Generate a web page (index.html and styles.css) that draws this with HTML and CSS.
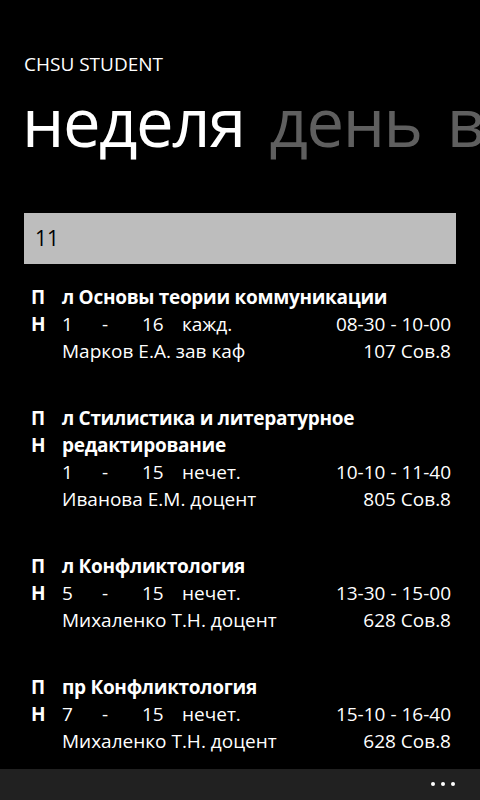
FILE: index.html
```html
<!DOCTYPE html>
<html lang="ru">
<head>
<meta charset="utf-8">
<title>CHSU STUDENT</title>
<link rel="stylesheet" href="styles.css">
</head>
<body>
<div class="screen">
  <div class="app-title">CHSU STUDENT</div>
  <div class="pivot">
    <span class="pivot-item active">неделя</span>
    <span class="pivot-item">день</span>
    <span class="pivot-item">в</span>
  </div>
  <div class="week-bar">11</div>
  <div class="list">
    <div class="lesson">
      <div class="day"><span>П</span><span>Н</span></div>
      <div class="info">
        <div class="name">л Основы теории коммуникации</div>
        <div class="row">
          <span class="c">1</span><span class="c">-</span><span class="c">16</span><span class="type">кажд.</span><span class="time">08-30 - 10-00</span>
        </div>
        <div class="row">
          <span class="teacher">Марков Е.А. зав каф</span><span class="room">107 Сов.8</span>
        </div>
      </div>
    </div>
    <div class="lesson">
      <div class="day"><span>П</span><span>Н</span></div>
      <div class="info">
        <div class="name">л Стилистика и литературное редактирование</div>
        <div class="row">
          <span class="c">1</span><span class="c">-</span><span class="c">15</span><span class="type">нечет.</span><span class="time">10-10 - 11-40</span>
        </div>
        <div class="row">
          <span class="teacher">Иванова Е.М. доцент</span><span class="room">805 Сов.8</span>
        </div>
      </div>
    </div>
    <div class="lesson">
      <div class="day"><span>П</span><span>Н</span></div>
      <div class="info">
        <div class="name">л Конфликтология</div>
        <div class="row">
          <span class="c">5</span><span class="c">-</span><span class="c">15</span><span class="type">нечет.</span><span class="time">13-30 - 15-00</span>
        </div>
        <div class="row">
          <span class="teacher">Михаленко Т.Н. доцент</span><span class="room">628 Сов.8</span>
        </div>
      </div>
    </div>
    <div class="lesson">
      <div class="day"><span>П</span><span>Н</span></div>
      <div class="info">
        <div class="name">пр Конфликтология</div>
        <div class="row">
          <span class="c">7</span><span class="c">-</span><span class="c">15</span><span class="type">нечет.</span><span class="time">15-10 - 16-40</span>
        </div>
        <div class="row">
          <span class="teacher">Михаленко Т.Н. доцент</span><span class="room">628 Сов.8</span>
        </div>
      </div>
    </div>
  </div>
  <div class="appbar">
    <div class="dots"><i></i><i></i><i></i></div>
  </div>
</div>
</body>
</html>
```

FILE: styles.css
```css
html, body {
  margin: 0;
  padding: 0;
  background: #000;
}
body {
  font-family: "Open Sans", "Noto Sans", sans-serif;
  color: #fff;
}
.screen {
  width: 480px;
  height: 800px;
  position: relative;
  overflow: hidden;
  background: #000;
}
.app-title {
  padding: 53px 0 0 24px;
  font-size: 19px;
  line-height: 22px;
  height: 22px;
}
.pivot {
  display: flex;
  gap: 25px;
  white-space: nowrap;
  padding-left: 22px;
  margin-top: 10px;
  font-size: 67px;
  line-height: 72px;
  height: 72px;
  letter-spacing: -1.5px;
}
.pivot-item {
  color: #5f5f5f;
}
.pivot-item.active {
  color: #fff;
}
.week-bar {
  margin: 56px 24px 0 24px;
  height: 51px;
  background: #bdbdbd;
  color: #000;
  font-size: 21px;
  line-height: 51px;
  padding-left: 11px;
}
.list {
  padding: 20px 29px 0 31px;
  display: flex;
  flex-direction: column;
  gap: 40px;
}
.lesson {
  display: flex;
  font-size: 19px;
  line-height: 27px;
}
.day {
  width: 31px;
  flex: none;
  display: flex;
  flex-direction: column;
  font-weight: 700;
}
.info {
  flex: 1;
  min-width: 0;
}
.name {
  font-weight: 700;
  letter-spacing: -0.3px;
}
.row {
  display: flex;
}
.c {
  width: 40px;
  flex: none;
}
.type {
  flex: none;
}
.time, .room {
  margin-left: auto;
}
.appbar {
  position: absolute;
  left: 0;
  right: 0;
  bottom: 0;
  height: 31px;
  background: #212121;
}
.dots {
  position: absolute;
  right: 25px;
  top: 13px;
  display: flex;
  gap: 6px;
}
.dots i {
  display: block;
  width: 4px;
  height: 4px;
  border-radius: 50%;
  background: #fff;
}
```
